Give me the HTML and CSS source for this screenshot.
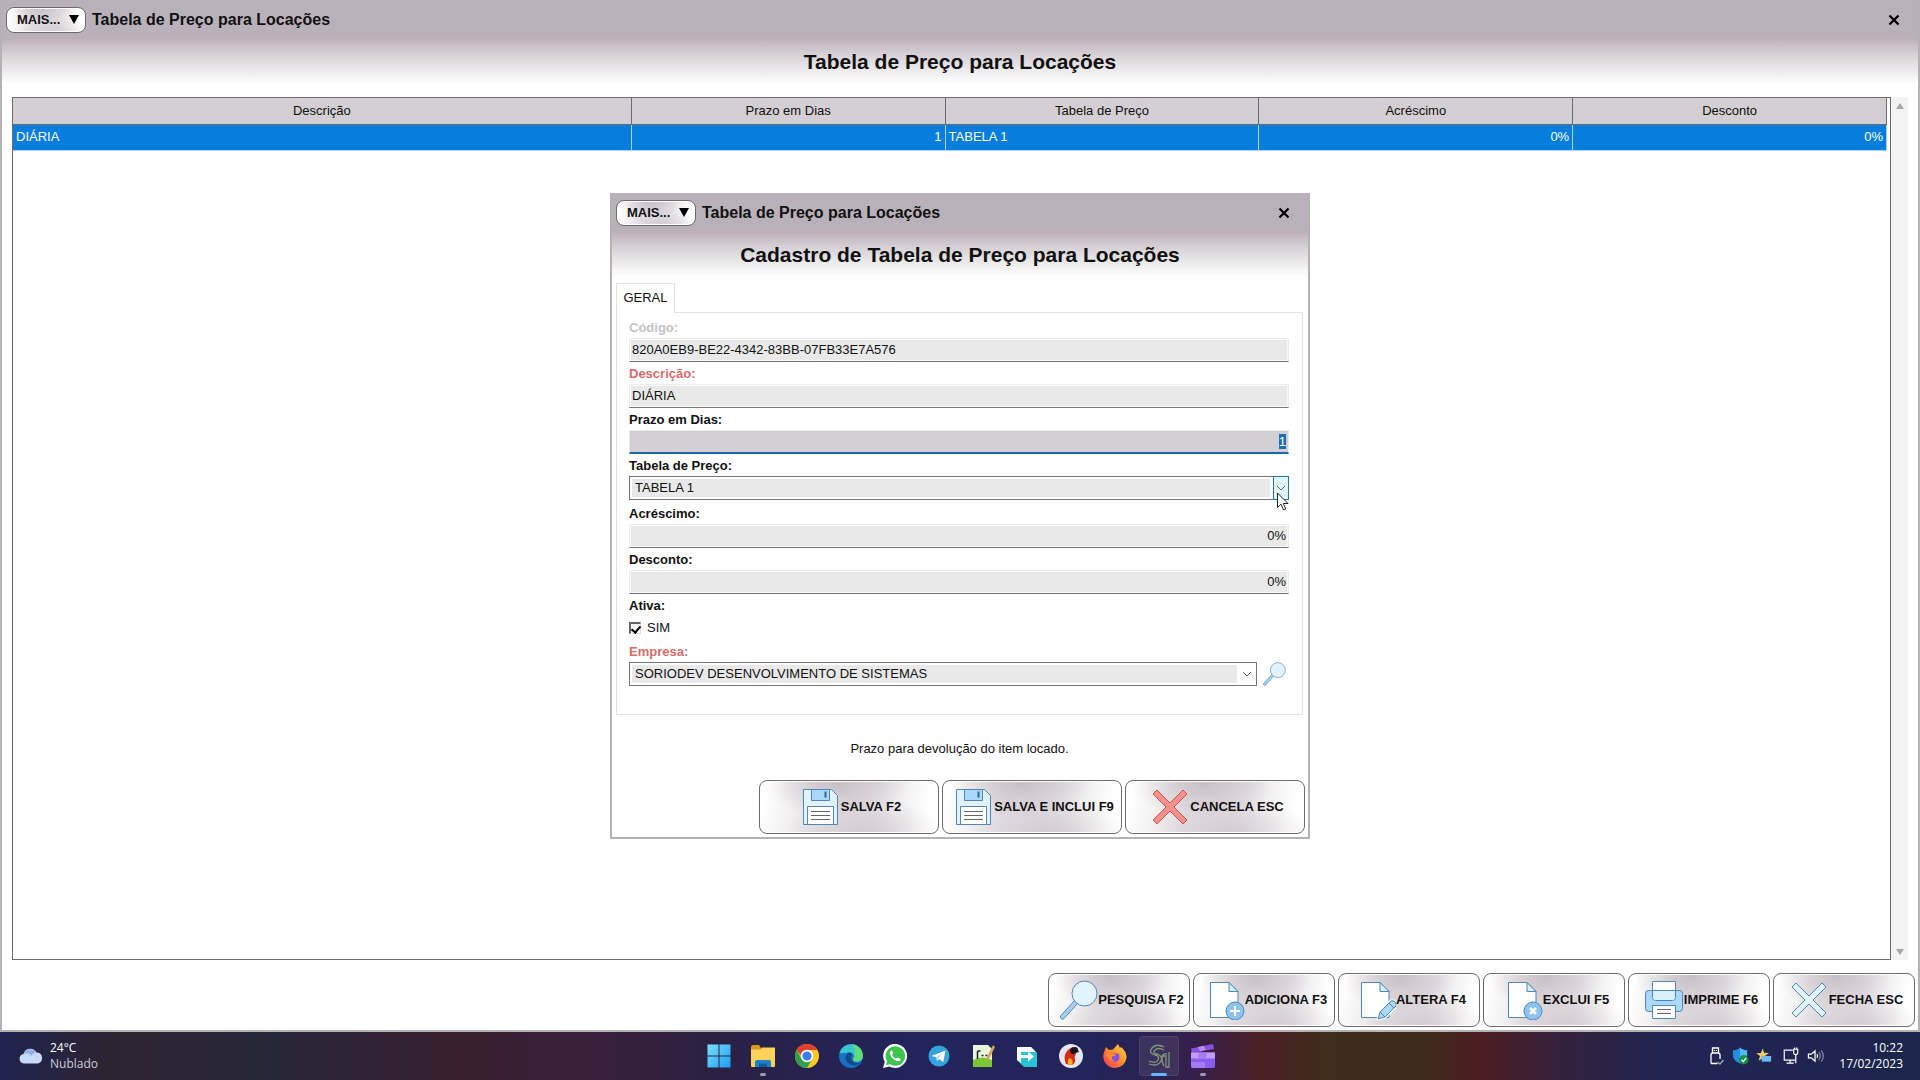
FILE: index.html
```html
<!DOCTYPE html>
<html lang="pt-BR">
<head>
<meta charset="utf-8">
<meta name="viewport" content="width=device-width, initial-scale=1">
<title>Tabela de Preço para Locações</title>
<link rel="stylesheet" href="styles.css">
</head>
<body>
<svg class="defs" aria-hidden="true">
  <defs>
    <symbol id="i-search" viewBox="0 0 40 40"><path d="M3 38.500q-1.500-1.500 0-3L17 20l3 3L6 38.500q-1.500 1.500-3 0z" fill="#a5d2f3" stroke="#4f86b4"/><circle cx="26.500" cy="13.500" r="12.500" fill="#e2f3ff" stroke="#4f86b4"/></symbol>
    <symbol id="i-page" viewBox="0 0 40 40"><path d="M5.500 2.500h18.500l9 9v26H5.500z" fill="#fff" stroke="#4f86b4"/><path d="M24 2.500v9h9z" fill="#d8efff" stroke="#4f86b4"/></symbol>
    <symbol id="i-floppy" viewBox="0 0 40 40"><path d="M2.500 2.500h28l6 6v29h-34z" fill="#e2f3ff" stroke="#4f86b4"/><path d="M10.500 2.500h18v11h-18z" fill="#a9d8f8" stroke="#4f86b4"/><path d="M24.500 4.500v6" stroke="#2f6692" stroke-width="2"/><path d="M6.500 19.500h26v18h-26z" fill="#fff" stroke="#4f86b4"/><path d="M10 24.500h19M10 28.500h19M10 32.500h19" stroke="#666"/></symbol>
    <symbol id="i-cross" viewBox="0 0 40 40"><path d="M7 3l13 13L33 3l4 4-13 13 13 13-4 4-13-13L7 37l-4-4 13-13L3 7z" stroke-linejoin="round"/></symbol>
    <symbol id="i-close" viewBox="0 0 12 12"><path d="M1.500 1.500l9 9m0-9l-9 9" stroke="#000" stroke-width="2.200"/></symbol>
    <symbol id="i-chevron" viewBox="0 0 10 6"><path d="M1 1l4 4 4-4" fill="none" stroke="#666"/></symbol>
  </defs>
</svg>

<main class="window window-main">
  <header class="window-head">
    <div class="titlebar">
      <button class="pill more" type="button">MAIS...<span class="more-arrow"></span></button>
      <span class="titlebar-text">Tabela de Preço para Locações</span>
      <button class="close" type="button" aria-label="Fechar"><svg><use href="#i-close"/></svg></button>
    </div>
    <h1 class="heading">Tabela de Preço para Locações</h1>
  </header>

  <section class="grid-area">
    <div class="grid-frame">
      <table class="grid">
        <thead>
          <tr><th>Descrição</th><th>Prazo em Dias</th><th>Tabela de Preço</th><th>Acréscimo</th><th>Desconto</th></tr>
        </thead>
        <tbody>
          <tr class="selected"><td>DIÁRIA</td><td class="num">1</td><td>TABELA 1</td><td class="num">0%</td><td class="num">0%</td></tr>
        </tbody>
      </table>
    </div>
    <div class="scrollbar"><span class="arrow-up"></span><span class="arrow-down"></span></div>
  </section>

  <footer class="actions">
    <button class="pill action" type="button"><svg><use href="#i-search"/></svg>PESQUISA F2</button>
    <button class="pill action" type="button"><svg viewBox="0 0 40 40"><use href="#i-page"/><circle cx="30" cy="31" r="9" fill="#8cc3ef" stroke="#4f86b4"/><path d="M30 26v10m-5-5h10" stroke="#fff" stroke-width="2"/></svg>ADICIONA F3</button>
    <button class="pill action" type="button"><svg viewBox="0 0 40 40"><use href="#i-page"/><path d="M22 39l2-7 11-11q2-1 4 1t1 4L29 37z" fill="#a9d8f8" stroke="#fff" stroke-width="3"/><path d="M22 39l2-7 11-11q2-1 4 1t1 4L29 37zM24 32l5 5m4-14l5 5" fill="#a9d8f8" stroke="#4f86b4"/></svg>ALTERA F4</button>
    <button class="pill action" type="button"><svg viewBox="0 0 40 40"><use href="#i-page"/><circle cx="30" cy="31" r="9" fill="#8cc3ef" stroke="#4f86b4"/><path d="M27 28l6 6m0-6l-6 6" stroke="#fff" stroke-width="2.500"/></svg>EXCLUI F5</button>
    <button class="pill action" type="button"><svg viewBox="0 0 40 40"><rect x="1.500" y="10.500" width="37" height="21" rx="3" fill="#a9d8f8" stroke="#4f86b4"/><path d="M8.500 1.500h23v16q0 3-3 3h-17q-3 0-3-3z" fill="#fff" stroke="#4f86b4"/><path d="M9 11h22v6q0 3-3 3H12q-3 0-3-3z" fill="#d8efff"/><path d="M8.500 10.500h23" stroke="#4f86b4"/><path d="M8.500 25.500h23v13h-23z" fill="#fff" stroke="#4f86b4"/><path d="M13 29.500h14M13 33.500h14" stroke="#666"/></svg>IMPRIME F6</button>
    <button class="pill action" type="button"><svg class="cross-blue"><use href="#i-cross"/></svg>FECHA ESC</button>
  </footer>

  <div class="modal-layer">
    <div class="window dialog" role="dialog" aria-labelledby="dialog-title">
      <header class="window-head">
        <div class="titlebar">
          <button class="pill more" type="button">MAIS...<span class="more-arrow"></span></button>
          <span class="titlebar-text">Tabela de Preço para Locações</span>
          <button class="close" type="button" aria-label="Fechar"><svg><use href="#i-close"/></svg></button>
        </div>
        <h2 class="heading" id="dialog-title">Cadastro de Tabela de Preço para Locações</h2>
      </header>

      <form class="form">
        <button class="tab" type="button">GERAL</button>
        <div class="panel">
          <label class="muted" for="codigo">Código:</label>
          <input class="field" id="codigo" type="text" value="820A0EB9-BE22-4342-83BB-07FB33E7A576" readonly>
          <label class="required" for="descricao">Descrição:</label>
          <input class="field" id="descricao" type="text" value="DIÁRIA">
          <label for="prazo">Prazo em Dias:</label>
          <input class="field num" id="prazo" type="text" value="1">
          <label for="tabela">Tabela de Preço:</label>
          <div class="combo combo-hot">
            <select id="tabela"><option>TABELA 1</option></select>
            <span class="combo-arrow"><svg><use href="#i-chevron"/></svg></span>
            <svg class="pointer" viewBox="0 0 12 19"><path d="M.5 1v14.500l3.500-3.300 2.500 5.800 2.300-1-2.500-5.500h4.700z" fill="#fff" stroke="#222"/></svg>
          </div>
          <label for="acrescimo">Acréscimo:</label>
          <input class="field num" id="acrescimo" type="text" value="0%">
          <label for="desconto">Desconto:</label>
          <input class="field num" id="desconto" type="text" value="0%">
          <span class="group-label" id="ativa-label">Ativa:</span>
          <div class="check"><input id="ativa" type="checkbox" aria-describedby="ativa-label" checked><label for="ativa">SIM</label></div>
          <label class="required" for="empresa">Empresa:</label>
          <div class="lookup">
            <div class="combo">
              <select id="empresa"><option>SORIODEV DESENVOLVIMENTO DE SISTEMAS</option></select>
              <span class="combo-arrow"><svg><use href="#i-chevron"/></svg></span>
            </div>
            <button class="lookup-button" type="button" aria-label="Pesquisar empresa"><svg><use href="#i-search"/></svg></button>
          </div>
        </div>
        <p class="hint">Prazo para devolução do item locado.</p>
        <div class="form-actions">
          <button class="pill action" type="button"><svg><use href="#i-floppy"/></svg>SALVA F2</button>
          <button class="pill action" type="button"><svg><use href="#i-floppy"/></svg>SALVA E INCLUI F9</button>
          <button class="pill action" type="button"><svg class="cross-red"><use href="#i-cross"/></svg>CANCELA ESC</button>
        </div>
      </form>
    </div>
  </div>
</main>

<footer class="taskbar">
  <div class="weather">
    <svg viewBox="0 0 24 16"><path d="M5 15.500a4.800 4.800 0 0 1-.5-9.500A7 7 0 0 1 17.500 4.500a5.600 5.600 0 0 1 1.500 11z" fill="#c5daf7"/><path d="M5 6a7 7 0 0 1 12.500-1.500 6 6 0 0 0-5 3.500A6 6 0 0 0 5 6z" fill="#8fb1e8"/></svg>
    <div><div class="temp">24°C</div><div>Nublado</div></div>
  </div>
  <nav class="apps">
    <button class="app" type="button" aria-label="Iniciar"><svg viewBox="0 0 24 24"><defs><linearGradient id="g-win" x2="1" y2="1"><stop stop-color="#7be0ff"/><stop offset="1" stop-color="#1a9cf0"/></linearGradient></defs><path d="M.5.500h11v11H.5zM12.500.500h11v11h-11zM.5 12.500h11v11H.5zM12.500 12.500h11v11h-11z" fill="url(#g-win)"/></svg></button>
    <button class="app running" type="button" aria-label="Explorador"><svg viewBox="0 0 24 24"><path d="M0 3q0-2 2-2h6l2 3v4H0z" fill="#d99a18"/><path d="M0 5.500h9.500L11 3.500h13V22q0 1-1 1H1q-1 0-1-1z" fill="#fbd25a"/><path d="M4 23v-5q0-2 2-2h12q2 0 2 2v5z" fill="#1f7fc7"/><path d="M8 19.500h8V23H8z" fill="#0f5c9c"/></svg></button>
    <button class="app" type="button" aria-label="Chrome"><svg viewBox="0 0 24 24"><circle cx="12" cy="12" r="12" fill="#fbc926"/><path d="M1.600 6A12 12 0 0 1 22.400 6H12L8 14z" fill="#e2402f"/><path d="M1.600 6A12 12 0 0 0 12 24l5.200-9H6.800z" fill="#2f9f4b"/><circle cx="12" cy="12" r="6.200" fill="#fff"/><circle cx="12" cy="12" r="4.600" fill="#3a7de8"/></svg></button>
    <button class="app" type="button" aria-label="Edge"><svg viewBox="0 0 24 24"><circle cx="12" cy="12" r="12" fill="#1573c4"/><path d="M.5 9A12 12 0 0 1 24 11.500c0 4-3 6-6.500 6-3 0-4.200-1.500-3.200-3 2-3-.3-6-4.300-6C6 8.500 2 10 .5 9z" fill="#38c6d0"/><path d="M13 0a12 12 0 0 1 11 11.500c0 4-3 6-6.500 6-3 0-4.200-1.500-3.200-3C17 10 16 4 13 0z" fill="#5fdc7c"/><path d="M10 8.500c-5 2-5 10 2.500 12.500 4 1.200 7-.3 9-2.500-4 1.500-9.500 0-9.500-5 0-2 1-2.500 1-3 0-1-1-2-3-2z" fill="#114a8c"/></svg></button>
    <button class="app" type="button" aria-label="WhatsApp"><svg viewBox="0 0 24 24"><path d="M0 24l1.800-6A12 12 0 1 1 6.300 22.400z" fill="#fff"/><path d="M3 21.300l1-4A9.800 9.800 0 1 1 7 20.300z" fill="#3fc351"/><path d="M8.500 6.500c-3 1.500-1.500 5 1.200 7.700s6 4.500 7.800 1.600c.5-.9-.3-1.300-2.500-2.300-1-.4-1 1.300-2 1-1.600-.6-3.100-2-3.700-3.600-.2-.8 1-1 .8-1.800-.4-1.200-.8-3-1.600-2.600z" fill="#fff"/></svg></button>
    <button class="app" type="button" aria-label="Telegram"><svg viewBox="0 0 24 24"><circle cx="12" cy="12" r="10.500" fill="#35a4de"/><path d="M4.500 12L18.500 6.500 16.300 18l-4.200-3-2 2-.7-3.800z" fill="#fff"/><path d="M9.400 13.200L16 8.500l-4.700 5.700L10 17z" fill="#b9dcf0"/></svg></button>
    <button class="app" type="button" aria-label="Editor"><svg viewBox="0 0 24 24"><path d="M2 1h15l4 4v18H2z" fill="#e9f4dc"/><path d="M2 16q10-5 19 0v7H2z" fill="#7cc832"/><path d="M6.500 7v8M6.500 7h3M10.500 11.500h2m2 0h2" stroke="#222" stroke-width="1.500"/><path d="M22 1l2 2-6 12-3 2 1-4z" fill="#d7a15a"/></svg></button>
    <button class="app" type="button" aria-label="Acesso remoto"><svg viewBox="0 0 24 24"><path d="M2 3h14l6 6v14H9l-7-7z" fill="#27c4d6"/><path d="M2 3h14l5 5H6v11l-4-3z" fill="#fff"/><path d="M6 8h15l1 1v7H6z" fill="#27c4d6"/><path d="M6 11h7V7.500l6 5-6 5V14H6z" fill="#fff"/></svg></button>
    <button class="app" type="button" aria-label="Firebird"><svg viewBox="0 0 24 24"><circle cx="12" cy="12" r="12" fill="#e3e7f1"/><path d="M7 20C3 11 8 5 14 3l4 4c-1 4-3 5-2 8 1 2-1 5-3 6z" fill="#d32b1a"/><path d="M11 8q0-5 5-5 3 0 3 3l1 2-4 1q-2 3-5-1z" fill="#1b1518"/><path d="M9 20q-1-5 2-6 4 2 2 7z" fill="#ffb01f"/></svg></button>
    <button class="app" type="button" aria-label="Firefox"><svg viewBox="0 0 24 24"><defs><linearGradient id="g-fox" x1="1" x2="0" y2="1"><stop stop-color="#ffe13a"/><stop offset=".5" stop-color="#ff8a2b"/><stop offset="1" stop-color="#f22c62"/></linearGradient></defs><path d="M12 24A11.600 11.600 0 0 1 .8 9L3 3l3 3 4-.500L15 0l2 4 1-1q6 5 5.500 11A11.600 11.600 0 0 1 12 24z" fill="url(#g-fox)"/><path d="M7 11q1-3 5-2l4 1q2 7-4 8-6-1-5-7z" fill="#8a4de0"/><path d="M3 9q4-2 6 0l4 1q-1 3-4 2-1 4 3 5-7 1-9-8z" fill="#ff8b2b"/></svg></button>
    <button class="app active" type="button" aria-label="Sistema"><svg viewBox="0 0 24 24" fill="none" stroke="#7d9a78" stroke-width="1.300"><path d="M17 3Q9-1 5 4t3 7q5 1 3 5t-9 1M17 6q-6-3-9 0t2 4q6 2 4 7-3 6-12 3M20 10q-5-1-5 4t2 8M22 8v15h-3V12h-4"/></svg></button>
    <button class="app running" type="button" aria-label="Vídeo"><svg viewBox="0 0 24 24"><path d="M0 4.500L22 0l1 5L1 9z" fill="#8c50dc"/><path d="M7 3l6-1.200L14.500 6 9 7.500z" fill="#b98bf4"/><path d="M0 8.500h24V22q0 2-2 2H2q-2 0-2-2z" fill="#8a5cf0"/><path d="M0 8.500h24v6H0z" fill="#c49bf8"/><path d="M8 8.500h8l-1 6H7zM0 18h14v6H2q-2 0-2-2z" fill="#a47af5"/></svg></button>
  </nav>
  <div class="tray">
    <svg viewBox="0 0 16 20" fill="none" stroke="#fff" stroke-width="1.300"><path d="M4 7V2h6v5M2.500 17.500V9q0-2 2-2h5q2 0 2 2v4M2.500 17.500H9M6 4v1m2-1v1"/><path d="M9 16l2.500 2L15 14" stroke="#aaa"/></svg>
    <svg viewBox="0 0 18 20"><path d="M1 4q5 0 7.500-3Q11 4 16 4v5q0 6-7.500 9Q1 15 1 9z" fill="#2490dd"/><path d="M8.500 1Q11 4 16 4v5q0 1-.3 2H8.500z" fill="#55b8f2"/><circle cx="12.500" cy="14" r="5" fill="#15904a"/><path d="M10 14l2 2 3-4" fill="none" stroke="#fff" stroke-width="1.300"/></svg>
    <svg viewBox="0 0 18 20"><path d="M7 2l1.700 4.500 5 .3-4 3 1.300 5L7 12l-4.300 3 1.500-5-4-3 5-.3z" fill="#f4c56a"/><path d="M6 10h10v6H6z" fill="#6db9f2"/></svg>
    <svg class="wide" viewBox="0 0 20 20" fill="none" stroke="#fff" stroke-width="1.300"><path d="M12 3.500H2.500v11h13M9 14.500V18M5 18h8M13 2.500h4.500v4q0 2-2.200 2T13 6.500zM15.300 8.500V18M14 2V.500M16.500 2V.500"/></svg>
    <svg viewBox="0 0 18 20" fill="none" stroke="#fff" stroke-width="1.300"><path d="M1.500 8v4h3l4 3.500v-11L4.500 8zM10.500 8q1.500 2 0 4"/><path d="M12.500 6q3 4 0 8M15 4q4.500 6 0 12" stroke="#888aa8"/></svg>
    <div class="clock"><div>10:22</div><div>17/02/2023</div></div>
  </div>
</footer>
<script src="script.js"></script>
</body>
</html>
```
FILE: styles.css
```css
* { box-sizing: border-box; }

:root {
  --frame: #b5b1b5;
  --line: #6d6a6d;
  --field: #e9e9e9;
}

body {
  margin: 0;
  min-height: 100vh;
  display: flex;
  flex-direction: column;
  background: #fff;
  color: #111;
  font: 13px/16px "Liberation Sans", Arial, sans-serif;
}

button, input, select { font: inherit; color: inherit; }
button { border: 0; padding: 0; background: none; }
.defs { display: none; }

/* Windows */
.window { background: #fff; border: 2px solid var(--frame); }
.window-main {
  position: relative;
  flex: 1;
  display: flex;
  flex-direction: column;
}
.window-head {
  margin-top: -2px;
  padding: 6px 4px;
  height: 90px;
  background: linear-gradient(#b9b1b9 0, #b9b1b9 34px, #bcb0b7 38px, #d2cdd1 52px, #e6e4e6 66px, #fff 84px);
}
.titlebar { display: flex; align-items: center; gap: 6px; height: 28px; }
.titlebar-text { flex: 1; font-size: 16px; font-weight: bold; line-height: 24px; padding-bottom: 1px; }
.close { width: 28px; height: 28px; margin-right: 6px; display: grid; place-items: center; }
.close svg { width: 12px; height: 12px; }
.heading {
  margin: 14px 0 0;
  text-align: center;
  font-size: 21px;
  line-height: 28px;
  font-weight: bold;
}

.pill {
  border: 1px solid var(--line);
  border-radius: 8px;
  background:
    radial-gradient(ellipse 40% 70% at 44% 4%, #c8c0c6, transparent),
    radial-gradient(ellipse 44% 70% at 58% 100%, #d3ccd1, transparent),
    linear-gradient(100deg, #fff 4%, #e4e0e3 35%, #e6e3e6 65%, #fff 92%);
  box-shadow: inset 0 0 0 1px #fff;
  font-weight: bold;
}
.more {
  width: 80px;
  height: 26px;
  display: flex;
  align-items: center;
  justify-content: space-between;
  padding: 0 6px 1px 10px;
}
.more-arrow { border: 5px solid transparent; border-top: 9px solid #000; border-bottom: 0; }

/* Price table */
.grid-area { flex: 1; display: flex; padding: 9px 10px 0; margin-top: -2px; }
.grid-frame { flex: 1; border: 1px solid var(--line); padding-right: 3px; }
.grid { width: 100%; border-collapse: collapse; table-layout: fixed; }
.grid th { height: 26px; padding: 0; font-weight: normal; background: #d3cfd2; border-right: 1px solid var(--line); border-bottom: 1px solid var(--line); }
.grid th:first-child { width: 33%; }
.grid td { height: 26px; padding: 0 3px; background: #077ddd; color: #fff; border-right: 1px solid #a5d4f5; border-bottom: 1px solid #a5d4f5; }
.grid .num, .field.num { text-align: right; }
.scrollbar {
  width: 17px;
  display: flex;
  flex-direction: column;
  justify-content: space-between;
  align-items: center;
  padding: 6px 0 5px;
  background: #f4f3f4;
}
.arrow-up, .arrow-down { border: 4px solid transparent; }
.arrow-up { border-top: 0; border-bottom: 6px solid #a5a5a5; }
.arrow-down { border-bottom: 0; border-top: 6px solid #a5a5a5; }

/* Command buttons */
.actions, .form-actions { display: flex; justify-content: flex-end; gap: 3px; }
.actions { padding: 13px 3px 3px; }
.action {
  width: 142px;
  height: 54px;
  padding-left: 4px;
  display: flex;
  align-items: center;
  justify-content: center;
  white-space: nowrap;
}
.action svg { width: 40px; height: 40px; flex: none; }
.form-actions .action { width: 180px; }
.cross-blue { fill: #e2f3ff; stroke: #4f86b4; }
.cross-red { fill: #fa8f8c; stroke: #c45554; }

/* Dialog */
.modal-layer { position: absolute; inset: -2px; display: grid; place-items: center; }
.dialog { width: 700px; max-width: 100%; }
.form { padding: 0 3px 3px 4px; }
.tab {
  display: block;
  width: 59px;
  height: 30px;
  margin-bottom: -1px;
  padding-bottom: 2px;
  position: relative;
  border: 1px solid #e4e4e4;
  border-bottom: 0;
  background: #fff;
}
.panel {
  display: flex;
  flex-direction: column;
  margin-right: 2px;
  padding: 3px 13px 28px 12px;
  border: 1px solid #e4e4e4;
}
.panel > label, .group-label { font-weight: bold; line-height: 20px; padding-top: 2px; }
.panel > .muted { color: #c4c4c4; }
.panel > .required { color: #d86b6b; }
.field {
  width: 100%;
  height: 24px;
  padding: 0 2px 2px;
  border: 1px solid #ececec;
  border-bottom-color: #777;
  border-radius: 0;
  background: var(--field);
  box-shadow: inset 0 0 0 1px #fafafa;
}
.field:focus { outline: 0; background: #d3cfd2; border-bottom: 2px solid #1a6aac; box-shadow: none; padding-bottom: 1px; }
.field::selection { background: #1a6fb5; color: #fff; }
.combo {
  position: relative;
  flex: 1;
  display: flex;
  height: 24px;
  padding: 2px 0 2px 2px;
  border: 1px solid #777;
}
.combo select {
  flex: 1;
  appearance: none;
  padding: 0 3px 1px;
  border: 0;
  border-radius: 0;
  background: var(--field);
}
.combo-arrow { width: 19px; display: grid; place-items: center; }
.combo-arrow svg { width: 10px; height: 6px; }
.combo-hot { flex: none; margin-bottom: 2px; }
.combo-hot .combo-arrow { width: 16px; margin: -3px -1px -3px 3px; border: 1px solid #2c7499; background: #e0f5fc; }
.pointer { position: absolute; right: -1px; top: 15px; width: 12px; height: 19px; }
.check { display: flex; align-items: center; gap: 6px; height: 24px; padding-bottom: 1px; }
.check input {
  appearance: none;
  width: 12px;
  height: 12px;
  margin: 0;
  border: 1px solid #ddd;
  border-top: 2px solid #666;
  border-left: 2px solid #666;
  display: grid;
  place-items: center;
}
.check input:checked::before { content: ""; width: 4px; height: 7px; margin-bottom: 2px; border: solid #000; border-width: 0 2px 2px 0; rotate: 40deg; }
.lookup { display: flex; gap: 5px; margin-right: 3px; }
.lookup-button { width: 24px; height: 24px; }
.lookup-button svg { width: 24px; height: 24px; display: block; }
.hint { margin: 26px 2px 23px 0; text-align: center; }

/* Taskbar */
.taskbar {
  height: 48px;
  display: grid;
  grid-template-columns: 1fr auto 1fr;
  align-items: center;
  padding: 0 17px 0 19px;
  background: linear-gradient(90deg, #1f2350 0, #2e2430 6%, #272739 14%, #38202f 24%, #38203a 31%, #2a2145 38%, #22245a 47%, #22245a 57%, #34204c 62%, #4c2022 66%, #3e2c1c 69%, #3c2c1c 74%, #4d1d20 77%, #35213a 81%, #202554 87%, #1c254c 100%);
  color: #fff;
  font: 12px/16px "Open Sans", "Noto Sans", sans-serif;
}
.weather { display: flex; align-items: center; gap: 7px; color: #c9c9d6; }
.weather svg { width: 24px; height: 16px; }
.temp { color: #fff; }
.apps { display: flex; gap: 4px; }
.app {
  width: 40px;
  height: 40px;
  position: relative;
  display: grid;
  place-items: center;
  border-radius: 4px;
}
.app svg { width: 24px; height: 24px; }
.app.active { background: #ffffff14; box-shadow: inset 0 0 0 1px #ffffff14; }
.running::after, .active::after {
  content: "";
  position: absolute;
  bottom: 0;
  left: 17px;
  width: 6px;
  height: 3px;
  border-radius: 2px;
  background: #9d9ab0;
}
.active::after { left: 12px; width: 16px; background: #66b8f5; }
.tray { display: flex; align-items: center; justify-content: flex-end; gap: 7px; }
.tray svg { width: 17px; height: 20px; }
.tray .wide { width: 18px; margin-left: 2px; }
.clock { margin-left: 8px; text-align: right; }
```
FILE: script.js
```js
const prazo = document.getElementById("prazo");
prazo.focus();
prazo.select();
```
